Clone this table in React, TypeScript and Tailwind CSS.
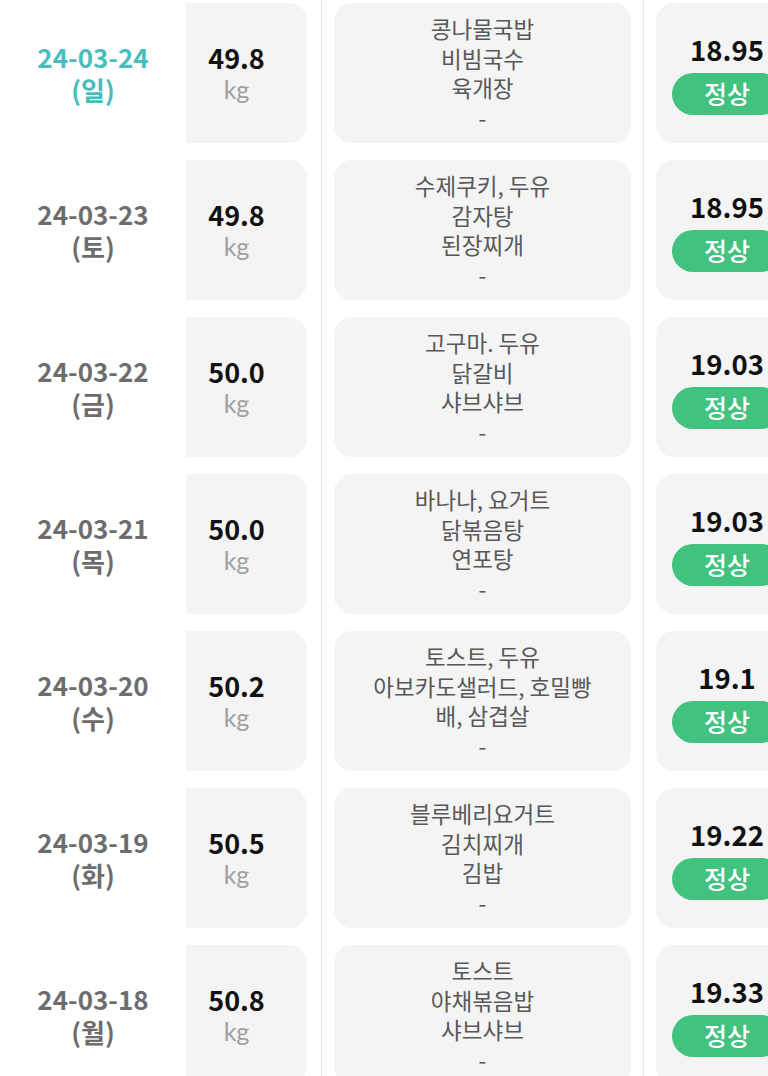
import React from "react";

type Row = {
  date: string;
  day: string;
  weight: string;
  meals: string[];
  bmi: string;
  today?: boolean;
};

const rows: Row[] = [
  { date: "24-03-24", day: "(일)", weight: "49.8", meals: ["콩나물국밥", "비빔국수", "육개장", "-"], bmi: "18.95", today: true },
  { date: "24-03-23", day: "(토)", weight: "49.8", meals: ["수제쿠키, 두유", "감자탕", "된장찌개", "-"], bmi: "18.95" },
  { date: "24-03-22", day: "(금)", weight: "50.0", meals: ["고구마. 두유", "닭갈비", "샤브샤브", "-"], bmi: "19.03" },
  { date: "24-03-21", day: "(목)", weight: "50.0", meals: ["바나나, 요거트", "닭볶음탕", "연포탕", "-"], bmi: "19.03" },
  { date: "24-03-20", day: "(수)", weight: "50.2", meals: ["토스트, 두유", "아보카도샐러드, 호밀빵", "배, 삼겹살", "-"], bmi: "19.1" },
  { date: "24-03-19", day: "(화)", weight: "50.5", meals: ["블루베리요거트", "김치찌개", "김밥", "-"], bmi: "19.22" },
  { date: "24-03-18", day: "(월)", weight: "50.8", meals: ["토스트", "야채볶음밥", "샤브샤브", "-"], bmi: "19.33" },
];

const kr = "font-['Noto_Sans_CJK_KR','Noto_Sans',sans-serif]";

export default function App() {
  return (
    <main className={`w-[768px] h-[1076px] overflow-hidden bg-white ${kr}`}>
      <div className="flex w-[900px]">
        {/* 날짜 (고정 열) */}
        <div className="relative z-10 w-[186px] shrink-0 bg-white">
          {rows.map((r) => (
            <div key={r.date} className="h-[157px] pt-[3px] pb-[14px]">
              <div className="h-[140px] flex items-center justify-center">
                <p
                  className={`text-center text-[26px] font-bold leading-[33px] ${
                    r.today ? "text-[#4abcbb]" : "text-[#6d6d6d]"
                  }`}
                >
                  {r.date}
                  <br />
                  {r.day}
                </p>
              </div>
            </div>
          ))}
        </div>

        {/* 몸무게 */}
        <div className="-ml-[20px] w-[156px] shrink-0 border-r border-[#e6e6e6]">
          {rows.map((r) => (
            <div key={r.date} className="h-[157px] pt-[3px] pb-[14px] pr-[14px]">
              <div className="h-[140px] rounded-[18px] bg-[#f4f4f4] flex flex-col items-center justify-center">
                <span className="text-[27px] font-bold leading-[32px] text-[#111]">{r.weight}</span>
                <span className="text-[25px] leading-[30px] text-[#a0a0a0] font-['Lato',sans-serif]">kg</span>
              </div>
            </div>
          ))}
        </div>

        {/* 식단 */}
        <div className="w-[322px] shrink-0 border-r border-[#e6e6e6] px-[12px]">
          {rows.map((r) => (
            <div key={r.date} className="h-[157px] pt-[3px] pb-[14px]">
              <div className="h-[140px] rounded-[18px] bg-[#f4f4f4] flex items-center justify-center">
                <p className="text-center whitespace-pre-line text-[22.5px] leading-[29.5px] text-[#585858]">
                  {r.meals.join("\n")}
                </p>
              </div>
            </div>
          ))}
        </div>

        {/* BMI */}
        <div className="w-[170px] shrink-0 pl-[12px]">
          {rows.map((r) => (
            <div key={r.date} className="h-[157px] pt-[3px] pb-[14px]">
              <div className="h-[140px] w-[142px] rounded-[18px] bg-[#f4f4f4] flex flex-col items-center justify-center px-[16px]">
                <span className="text-[27.5px] font-bold leading-[34px] text-[#111]">{r.bmi}</span>
                <span className="mt-[7px] w-full h-[42px] rounded-full bg-[#41c27f] text-white text-[25px] font-medium flex items-center justify-center">
                  정상
                </span>
              </div>
            </div>
          ))}
        </div>
      </div>
    </main>
  );
}
